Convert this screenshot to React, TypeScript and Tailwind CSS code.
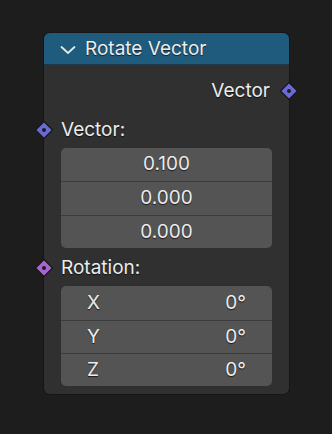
import React from 'react';

function Socket({ color, side }: { color: string; side: 'left' | 'right' }) {
  return (
    <svg
      width="20"
      height="20"
      viewBox="0 0 20 20"
      className={`absolute top-1/2 h-[20px] w-[20px] -translate-y-1/2 ${side === 'left' ? 'left-[-10px]' : 'right-[-10px]'}`}
    >
      <path d="M10 1.5 L18.5 10 L10 18.5 L1.5 10 Z" fill={color} stroke="#161616" strokeWidth="1.2" />
      <circle cx="10" cy="10" r="2" fill="#1e1e1e" />
    </svg>
  );
}

function FieldBox({ rows }: { rows: { label?: string; value: string }[] }) {
  return (
    <div className="mx-[17px] overflow-hidden rounded-[5px] bg-[#545454]">
      {rows.map((r, i) => (
        <div
          key={i}
          className={`flex h-[33.4px] items-center px-[26px] text-[19px] text-[#ececec] [text-shadow:0_1px_1px_#1a1a1a] ${i > 0 ? 'border-t border-[#3c3c3c]' : ''} ${r.label ? 'justify-between' : 'justify-center'}`}
        >
          {r.label && <span>{r.label}</span>}
          <span>{r.value}</span>
        </div>
      ))}
    </div>
  );
}

export default function App() {
  return (
    <div
      className="h-[434px] w-[332px] bg-[#1d1d1d] pt-[33px] pl-[44px]"
      style={{ fontFamily: 'Inter, "Noto Sans", sans-serif' }}
    >
      <div className="w-[245px] rounded-[6px] bg-[#303030] pb-[8px] shadow-[0_0_0_1px_#161616]">
        <div className="flex h-[32px] items-center gap-[9px] rounded-t-[6px] border-b border-[#1c3a4c] bg-[#1f5b7d] pt-[2px] pl-[16px] text-[19px] text-[#ececec] [text-shadow:0_1px_1px_#10202a]">
          <svg width="16" height="16" viewBox="0 0 16 16" fill="none">
            <path d="M1.5 5 L8 11 L14.5 5" stroke="#e6e6e6" strokeWidth="1.8" strokeLinecap="round" strokeLinejoin="round" />
          </svg>
          <span>Rotate Vector</span>
        </div>
        <div className="relative mt-[11px] flex h-[30px] items-center justify-end pr-[19px] text-[19px] text-[#ececec] [text-shadow:0_1px_1px_#111]">
          Vector
          <Socket color="#6a6ad6" side="right" />
        </div>
        <div className="relative mt-[9px] flex h-[30px] items-center pl-[17px] text-[19px] text-[#ececec] [text-shadow:0_1px_1px_#111]">
          Vector:
          <Socket color="#6a6ad6" side="left" />
        </div>
        <div className="mt-[3px]">
          <FieldBox rows={[{ value: '0.100' }, { value: '0.000' }, { value: '0.000' }]} />
        </div>
        <div className="relative mt-[5px] flex h-[30px] items-center pl-[17px] text-[19px] text-[#ececec] [text-shadow:0_1px_1px_#111]">
          Rotation:
          <Socket color="#a866d0" side="left" />
        </div>
        <div className="mt-[3px]">
          <FieldBox
            rows={[
              { label: 'X', value: '0°' },
              { label: 'Y', value: '0°' },
              { label: 'Z', value: '0°' },
            ]}
          />
        </div>
      </div>
    </div>
  );
}
